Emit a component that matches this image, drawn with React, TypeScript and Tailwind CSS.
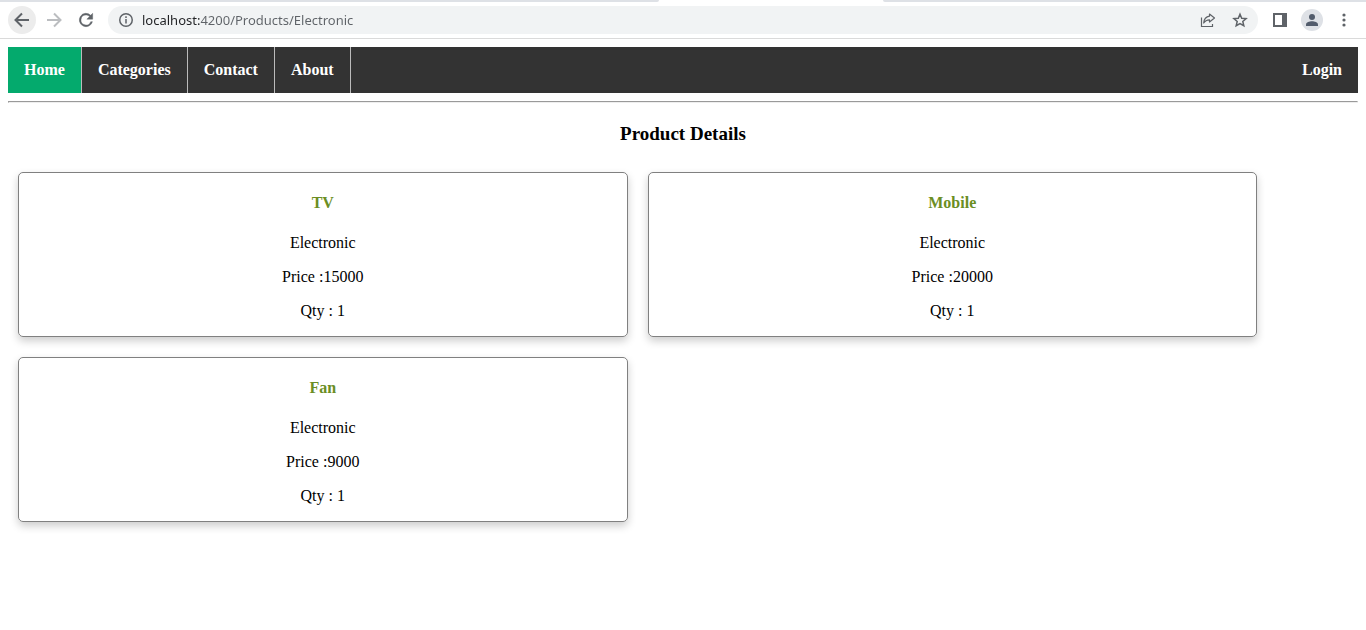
import { useState } from "react";

type Product = { name: string; category: string; price: number; qty: number };

const products: Product[] = [
  { name: "TV", category: "Electronic", price: 15000, qty: 1 },
  { name: "Mobile", category: "Electronic", price: 20000, qty: 1 },
  { name: "Fan", category: "Electronic", price: 9000, qty: 1 },
];

function TabStrip() {
  return (
    <div className="flex h-[2px]">
      <div className="w-[659px] rounded-br-[2px] bg-[#dee1e6]" />
      <div className="w-56" />
      <div className="flex-1 rounded-bl-[2px] bg-[#dee1e6]" />
    </div>
  );
}

function Toolbar() {
  const [url, setUrl] = useState("localhost:4200/Products/Electronic");
  return (
    <div className="flex h-[37px] items-center border-b border-[#dadada] pr-[10px] pl-2 text-[#5f6368]">
      <button aria-label="Back" className="flex size-7 items-center justify-center rounded-full bg-[#ececec]">
        <svg width="20" height="20" viewBox="0 0 20 20" fill="none" stroke="currentColor" strokeWidth="2">
          <path d="M17 10H4M10 3.500 3.500 10l6.500 6.500" />
        </svg>
      </button>
      <button aria-label="Forward" className="ml-1 flex size-7 items-center justify-center text-[#bbbdc0]">
        <svg width="20" height="20" viewBox="0 0 20 20" fill="none" stroke="currentColor" strokeWidth="2">
          <path d="M3 10h13M10 3.500l6.500 6.500-6.500 6.500" />
        </svg>
      </button>
      <button aria-label="Reload" className="ml-1 flex size-7 items-center justify-center">
        <svg width="20" height="20" viewBox="0 0 24 24" fill="currentColor">
          <path d="M17.650 6.350A8 8 0 1 0 19.730 14H17.650A6 6 0 1 1 12 6c1.660 0 3.140.690 4.220 1.780L13 11h7V4z" stroke="currentColor" strokeWidth=".5" />
        </svg>
      </button>
      <div className="ml-2 flex h-7 min-w-0 flex-1 items-center rounded-full bg-[#f1f3f4] pr-[6px] pl-[10px]">
        <button aria-label="View site information" className="flex size-4 shrink-0 items-center justify-center">
          <svg width="16" height="16" viewBox="0 0 16 16" fill="none" stroke="currentColor" strokeWidth="1.500">
            <circle cx="8" cy="8" r="6.250" />
            <path d="M8 7v4.500M8 4.300v1.700" />
          </svg>
        </button>
        <input
          aria-label="Address"
          value={url}
          onChange={(e) => setUrl(e.target.value)}
          className="ml-2 h-5 min-w-0 flex-1 bg-[linear-gradient(to_right,#202124_58px,#5f6368_58px)] bg-clip-text font-['Noto_Sans',sans-serif] text-[13px] leading-5 text-[#5f6368] outline-none [-webkit-text-fill-color:transparent]"
        />
        <button aria-label="Share" className="flex size-6 items-center justify-center">
          <svg width="16" height="16" viewBox="0 0 16 16" fill="none" stroke="currentColor" strokeWidth="1.200">
            <path d="M1.500 5.500v9h11V12" />
            <path d="M9.500 2l5 4-5 4V7.800C6.500 7.800 5 8.700 3.700 11 4 7.500 5.800 4.700 9.500 4.200z" strokeLinejoin="round" />
          </svg>
        </button>
        <button aria-label="Bookmark this page" className="ml-2 flex size-6 items-center justify-center">
          <svg width="16" height="16" viewBox="0 0 16 16" fill="none" stroke="currentColor" strokeWidth="1.500">
            <path d="M8 2.200l1.700 4 4.400.400-3.300 2.900 1 4.200L8 11.500l-3.800 2.200 1-4.200-3.300-2.900 4.400-.4z" />
          </svg>
        </button>
      </div>
      <button aria-label="Side panel" className="ml-[10px] flex size-6 items-center justify-center">
        <svg width="14" height="14" viewBox="0 0 14 14" fill="currentColor">
          <path fillRule="evenodd" d="M0 0h14v14H0zM2 2v10h7V2z" />
        </svg>
      </button>
      <button aria-label="Profile" className="ml-[9px] flex size-[22px] items-center justify-center rounded-full bg-[#dee1e6] text-[#525c6c]">
        <svg width="14" height="14" viewBox="0 0 14 14" fill="currentColor">
          <circle cx="7" cy="4" r="3" />
          <path d="M1 13v-1.500C1 9.500 4.500 8.300 7 8.300s6 1.200 6 3.200V13z" />
        </svg>
      </button>
      <button aria-label="Menu" className="ml-[9px] flex size-6 items-center justify-center">
        <svg width="4" height="14" viewBox="0 0 4 14" fill="currentColor">
          <circle cx="2" cy="2" r="1.600" />
          <circle cx="2" cy="7" r="1.600" />
          <circle cx="2" cy="12" r="1.600" />
        </svg>
      </button>
    </div>
  );
}

function NavBar() {
  const link = "block px-4 py-[14px] leading-[18px]";
  return (
    <nav className="bg-[#333333] font-bold text-white">
      <ul className="flex">
        <li className="border-r border-[#bbbbbb]">
          <a href="#home" className={`${link} bg-[#04aa6d]`}>Home</a>
        </li>
        <li className="border-r border-[#bbbbbb]">
          <a href="#categories" className={link}>Categories</a>
        </li>
        <li className="border-r border-[#bbbbbb]">
          <a href="#contact" className={link}>Contact</a>
        </li>
        <li className="border-r border-[#bbbbbb]">
          <a href="#about" className={link}>About</a>
        </li>
        <li className="ml-auto">
          <a href="#login" className={link}>Login</a>
        </li>
      </ul>
    </nav>
  );
}

function ProductCard({ product }: { product: Product }) {
  return (
    <article className="m-[10px] box-content w-[45%] rounded-[5px] border border-[#808080] pt-[21px] pb-4 text-center leading-[18px] shadow-[0_4px_8px_0_rgba(0,0,0,0.2)]">
      <h4 className="mb-[22px] font-bold text-[#6b8e23]">{product.name}</h4>
      <div className="flex flex-col gap-4">
        <p>{product.category}</p>
        <p>{`Price :${product.price}`}</p>
        <p>{`Qty : ${product.qty}`}</p>
      </div>
    </article>
  );
}

export default function App() {
  return (
    <div className="bg-white">
      <TabStrip />
      <Toolbar />
      <main className="p-2 font-['Liberation_Serif',serif] text-base text-black">
        <NavBar />
        <hr className="my-2 h-[2px] border border-[#9a9a9a] border-r-[#eeeeee] border-b-[#eeeeee]" />
        <h3 className="mt-5 mb-[18px] text-center text-[19px] leading-[21px] font-bold">Product Details</h3>
        <section className="flex flex-wrap">
          {products.map((p) => (
            <ProductCard key={p.name} product={p} />
          ))}
        </section>
      </main>
    </div>
  );
}
